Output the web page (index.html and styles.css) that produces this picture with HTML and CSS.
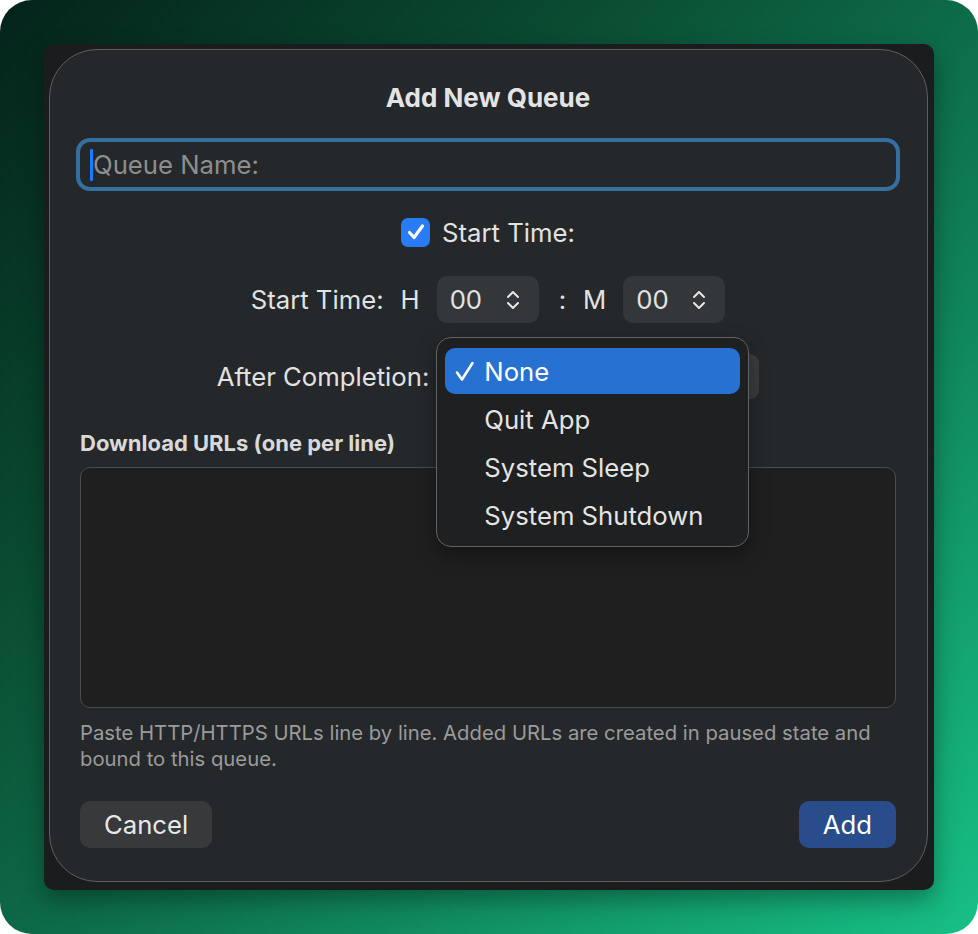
FILE: index.html
```html
<!DOCTYPE html>
<html lang="en">
<head>
    <meta charset="UTF-8">
    <meta name="viewport" content="width=device-width, initial-scale=1.0">
    <title>Add New Queue</title>
    <link rel="stylesheet" href="styles.css">
</head>
<body>
    <div class="backdrop">
        <div class="window">
            <div class="sheet">
                <h1 class="title">Add New Queue</h1>

                <div class="name-field">
                    <span class="caret"></span>
                    <span class="placeholder">Queue Name:</span>
                </div>

                <div class="row check-row">
                    <span class="checkbox">
                        <svg width="20" height="20" viewBox="0 0 20 20"><path d="M3.5 10.5 L8 15.5 L16.5 4" fill="none" stroke="#fff" stroke-width="3.2" stroke-linecap="round" stroke-linejoin="round"/></svg>
                    </span>
                    <span class="label">Start Time:</span>
                </div>

                <div class="row time-row">
                    <span class="label">Start Time:</span>
                    <span class="unit">H</span>
                    <div class="stepper">
                        <span>00</span>
                        <svg width="14" height="22" viewBox="0 0 14 22"><path d="M2 8 L7 3 L12 8 M2 14 L7 19 L12 14" fill="none" stroke="#e6e6e6" stroke-width="2" stroke-linecap="round" stroke-linejoin="round"/></svg>
                    </div>
                    <span class="unit colon">:</span>
                    <span class="unit">M</span>
                    <div class="stepper">
                        <span>00</span>
                        <svg width="14" height="22" viewBox="0 0 14 22"><path d="M2 8 L7 3 L12 8 M2 14 L7 19 L12 14" fill="none" stroke="#e6e6e6" stroke-width="2" stroke-linecap="round" stroke-linejoin="round"/></svg>
                    </div>
                </div>

                <div class="row after-row">
                    <span class="label">After Completion:</span>
                    <div class="popup">
                        <div class="menu">
                            <div class="menu-item selected">
                                <span class="tick"><svg width="20" height="22" viewBox="0 0 20 22"><path d="M2 12.5 L7 19.5 L17.5 3" fill="none" stroke="#fff" stroke-width="2.6" stroke-linecap="round" stroke-linejoin="round"/></svg></span>None
                            </div>
                            <div class="menu-item"><span class="tick"></span>Quit App</div>
                            <div class="menu-item"><span class="tick"></span>System Sleep</div>
                            <div class="menu-item"><span class="tick"></span>System Shutdown</div>
                        </div>
                    </div>
                </div>

                <div class="section-label">Download URLs (one per line)</div>
                <div class="urls"></div>
                <p class="help">Paste HTTP/HTTPS URLs line by line. Added URLs are created in paused state and bound to this queue.</p>

                <div class="actions">
                    <button class="btn">Cancel</button>
                    <button class="btn primary">Add</button>
                </div>
            </div>
        </div>
    </div>
</body>
</html>
```

FILE: styles.css
```css
body {
    margin: 0;
    padding: 0;
    background-color: #fff;
    font-family: 'Inter', 'Liberation Sans', sans-serif;
}
.backdrop {
    width: 978px;
    height: 934px;
    box-sizing: border-box;
    padding: 44px;
    border-radius: 32px;
    background: linear-gradient(135deg, #04231a 0%, #0a4a31 30%, #0e7650 58%, #17c086 100%);
}
.window {
    height: 100%;
    box-sizing: border-box;
    padding: 5px 6px 8px 5px;
    background-color: #1b1c1e;
    border-radius: 10px;
    box-shadow: 0 10px 24px rgba(0, 0, 0, 0.35);
}
.sheet {
    height: 100%;
    box-sizing: border-box;
    padding: 32px 31px 0 30px;
    background-color: #25282a;
    border: 1.5px solid #5c5e60;
    border-radius: 48px;
    display: flex;
    flex-direction: column;
    color: #e2e2e2;
}
.title {
    margin: 0;
    font-size: 26px;
    line-height: 31px;
    font-weight: 700;
    text-align: center;
    color: #e4e4e4;
}
.name-field {
    margin: 25px -4px 0 -4px;
    height: 53px;
    box-sizing: border-box;
    border: 4px solid #346f9f;
    border-radius: 14px;
    display: flex;
    align-items: center;
    padding-left: 10px;
}
.caret {
    width: 3px;
    height: 32px;
    background-color: #1a7cff;
    border-radius: 1px;
}
.placeholder {
    font-size: 25.7px;
    color: #8e8e8e;
}
.row {
    display: flex;
    align-items: center;
    justify-content: center;
    font-size: 25.7px;
}
.label {
    color: #e2e2e2;
}
.check-row {
    margin-top: 26px;
    height: 30px;
    gap: 12px;
}
.checkbox {
    width: 29px;
    height: 29px;
    border-radius: 7px;
    background-color: #2a7cf6;
    display: flex;
    align-items: center;
    justify-content: center;
}
.time-row {
    margin-top: 29px;
    height: 47px;
}
.time-row .label {
    margin-right: 17px;
}
.unit {
    color: #e2e2e2;
    margin-right: 17px;
}
.unit.colon {
    margin-left: 2px;
}
.stepper {
    width: 102px;
    height: 47px;
    box-sizing: border-box;
    padding: 0 19px 0 13px;
    background-color: #34373a;
    border-radius: 10px;
    display: flex;
    align-items: center;
    justify-content: space-between;
    color: #e2e2e2;
    margin-right: 18px;
}
.stepper:last-child {
    margin-right: 0;
}
.after-row {
    margin-top: 31px;
    height: 45px;
    gap: 10px;
}
.popup {
    position: relative;
    width: 320px;
    height: 45px;
    background-color: #3a3c3e;
    border-radius: 9px;
}
.menu {
    position: absolute;
    left: -3px;
    top: -17px;
    width: 313px;
    height: 210px;
    box-sizing: border-box;
    padding: 10px 8px 8px 8px;
    background-color: #1f2022;
    border: 1.5px solid #606264;
    border-radius: 15px;
    box-shadow: 0 8px 20px rgba(0, 0, 0, 0.35);
    display: flex;
    flex-direction: column;
    gap: 2px;
}
.menu-item {
    height: 46px;
    border-radius: 10px;
    display: flex;
    align-items: center;
    font-size: 25.7px;
    color: #e4e4e4;
    padding-left: 10px;
}
.menu-item.selected {
    background-color: #2671d1;
    color: #fff;
}
.tick {
    width: 29px;
    display: flex;
    align-items: center;
}
.section-label {
    margin-top: 31px;
    font-size: 22px;
    line-height: 26px;
    font-weight: 700;
    color: #d9d9d9;
}
.urls {
    margin-top: 11px;
    height: 241px;
    box-sizing: border-box;
    background-color: #1f1f20;
    border: 1.5px solid #494b4d;
    border-radius: 10px;
}
.help {
    margin: 12px 0 0 0;
    font-size: 20.3px;
    line-height: 26px;
    color: #9b9b9b;
}
.actions {
    margin-top: 29px;
    display: flex;
    justify-content: space-between;
}
.btn {
    height: 47px;
    padding: 0 24px;
    border: none;
    border-radius: 10px;
    background-color: #37393b;
    color: #e8e8e8;
    font-family: inherit;
    font-size: 25.7px;
}
.btn.primary {
    background-color: #284d8a;
    color: #fff;
}
```
